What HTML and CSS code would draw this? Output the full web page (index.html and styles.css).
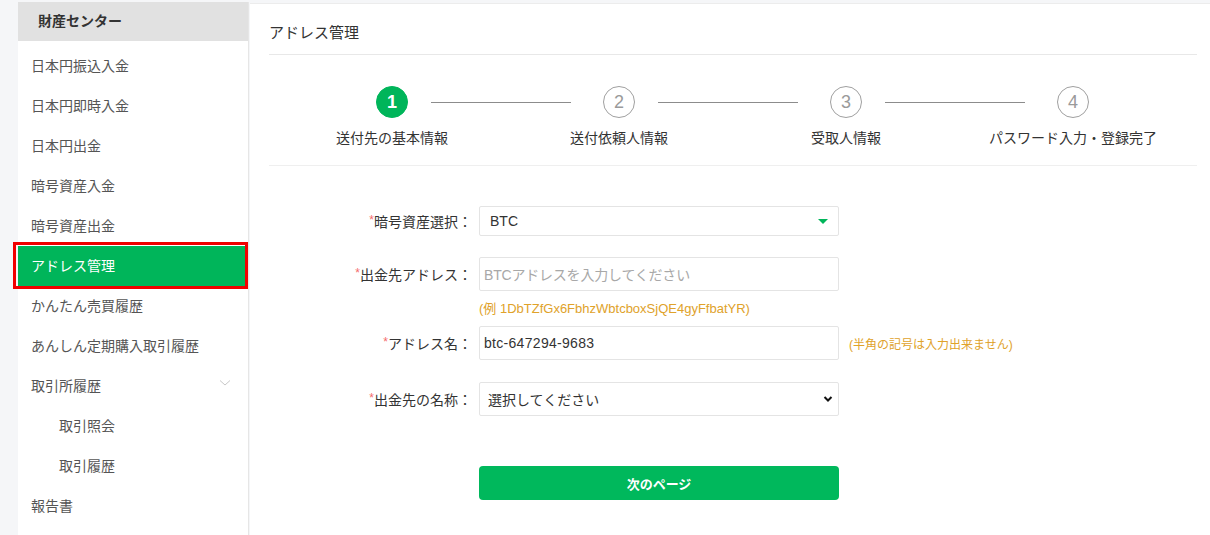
FILE: index.html
```html
<!DOCTYPE html>
<html lang="ja">
<head>
<meta charset="utf-8">
<link rel="stylesheet" href="styles.css">
</head>
<body>
<div class="page">
  <aside class="sidebar">
    <div class="side-head">財産センター</div>
    <ul class="menu">
      <li class="item">日本円振込入金</li>
      <li class="item">日本円即時入金</li>
      <li class="item">日本円出金</li>
      <li class="item">暗号資産入金</li>
      <li class="item">暗号資産出金</li>
      <li class="item active">アドレス管理<span class="mark"></span></li>
      <li class="item">かんたん売買履歴</li>
      <li class="item">あんしん定期購入取引履歴</li>
      <li class="item group">取引所履歴
        <svg class="chev" width="12" height="8" viewBox="0 0 12 8"><path d="M1 1.5 L6 6 L11 1.5" fill="none" stroke="#c8c8c8" stroke-width="1"/></svg>
      </li>
      <li class="item sub">取引照会</li>
      <li class="item sub">取引履歴</li>
      <li class="item">報告書</li>
    </ul>
  </aside>
  <main class="main">
    <div class="title">アドレス管理</div>
    <div class="steps">
      <div class="step-track">
        <span class="circle done">1</span><span class="line"></span>
        <span class="circle">2</span><span class="line"></span>
        <span class="circle">3</span><span class="line"></span>
        <span class="circle">4</span>
      </div>
      <div class="step-labels">
        <span>送付先の基本情報</span>
        <span>送付依頼人情報</span>
        <span>受取人情報</span>
        <span>パスワード入力・登録完了</span>
      </div>
    </div>
    <form class="form">
      <div class="row r1">
        <label class="lab"><i>*</i>暗号資産選択：</label>
        <div class="field pick">BTC<span class="tri"></span></div>
      </div>
      <div class="row r2">
        <label class="lab"><i>*</i>出金先アドレス：</label>
        <div class="field tall ph">BTCアドレスを入力してください</div>
      </div>
      <div class="hint-row"><span class="hint ex">(例 1DbTZfGx6FbhzWbtcboxSjQE4gyFfbatYR)</span></div>
      <div class="row r3">
        <label class="lab"><i>*</i>アドレス名：</label>
        <div class="field tall name">btc-647294-9683</div>
        <span class="hint note">(半角の記号は入力出来ません)</span>
      </div>
      <div class="row r4">
        <label class="lab"><i>*</i>出金先の名称：</label>
        <div class="field tall sel">選択してください
          <svg width="10" height="8" viewBox="0 0 10 8"><path d="M1.5 2 L5 5.5 L8.5 2" fill="none" stroke="#111" stroke-width="2"/></svg>
        </div>
      </div>
      <div class="row btn-row">
        <span class="lab"></span>
        <button type="button" class="btn">次のページ</button>
      </div>
    </form>
  </main>
</div>
</body>
</html>
```
FILE: styles.css
```css
* { box-sizing: border-box; margin: 0; padding: 0; }
html, body { height: 100%; }
body {
  background: #f5f6f8;
  font-family: "Liberation Sans", "Noto Sans CJK JP", sans-serif;
  color: #333;
  overflow: hidden;
}
.page {
  display: flex;
  padding: 2px 0 0 18px;
  height: 100%;
}
.sidebar {
  width: 231px;
  flex: none;
  background: #fff;
  border-right: 1px solid #e6e6e6;
}
.side-head {
  height: 39px;
  background: #e1e1e1;
  font-size: 14px;
  font-weight: bold;
  color: #333;
  padding-left: 20px;
  line-height: 39px;
}
.menu { list-style: none; padding-top: 5px; }
.item {
  position: relative;
  height: 40px;
  line-height: 40px;
  padding-left: 13px;
  font-size: 14px;
  color: #555;
  display: flex;
  align-items: center;
}
.item.sub { padding-left: 41px; }
.item.active {
  background: #00b55a;
  color: #fff;
  margin-right: 3px;
}
.mark {
  position: absolute;
  left: -5px; top: -4px; right: -3px; bottom: -3px;
  border: 3px solid #f00000;
}
.chev { margin-left: auto; margin-right: 17px; margin-top: -6px; }
.main {
  flex: 1;
  background: #fff;
  margin-left: 1px;
  margin-top: 1px;
  border-top: 1px solid #ececec;
  padding: 0 13px 0 19px;
}
.title {
  height: 51px;
  line-height: 58px;
  font-size: 15px;
  color: #333;
  border-bottom: 1px solid #e8e8e8;
}
.steps {
  padding-top: 31px;
  height: 111px;
  border-bottom: 1px solid #efefef;
}
.step-track {
  display: flex;
  align-items: center;
  padding-left: 107px;
}
.circle {
  width: 32px;
  height: 32px;
  flex: none;
  border-radius: 50%;
  border: 1px solid #a0a0a0;
  color: #9a9a9a;
  font-size: 18px;
  display: flex;
  align-items: center;
  justify-content: center;
  font-family: "Liberation Sans", sans-serif;
}
.circle.done {
  background: #00b55a;
  border-color: #00b55a;
  color: #fff;
  font-weight: bold;
}
.line {
  width: 140px;
  height: 1px;
  background: #8c8c8c;
  margin: 0 32px 0 23px;
  flex: none;
}
.step-labels {
  display: grid;
  grid-template-columns: repeat(4, 227px);
  padding-left: 9.5px;
  margin-top: 10px;
}
.step-labels span {
  text-align: center;
  font-size: 14px;
  line-height: 20px;
  color: #333;
}
.form { padding-top: 40px; }
.row { display: flex; align-items: center; }
.lab {
  width: 203px;
  text-align: right;
  font-size: 14px;
  color: #333;
  margin-right: 7px;
  flex: none;
}
.lab i {
  font-style: normal;
  color: #f56c6c;
  font-size: 12px;
  position: relative;
  top: -3px;
}
.field {
  width: 360px;
  height: 30px;
  border: 1px solid #e4e4e4;
  border-radius: 2px;
  font-size: 14px;
  color: #333;
  padding-left: 10px;
  display: flex;
  align-items: center;
  flex: none;
}
.field.tall { height: 34px; }
.field.ph { color: #a8a8a8; padding-left: 4px; letter-spacing: -0.2px; }
.field.name { padding-left: 4px; letter-spacing: 0.3px; }
.tri {
  margin-left: auto;
  margin-right: 10px;
  width: 0; height: 0;
  border-left: 5px solid transparent;
  border-right: 5px solid transparent;
  border-top: 5px solid #00b55a;
}
.field.sel { padding-left: 8px; }
.field.sel svg { margin-left: auto; margin-right: 5px; }
.r2 { margin-top: 21px; }
.hint-row { padding-left: 210px; height: 35px; line-height: 34px; }
.hint { font-size: 12px; color: #e0a22a; }
.hint.ex { font-size: 13px; }
.note { margin-left: 10px; }
.r4 { margin-top: 22px; }
.btn-row { margin-top: 50px; }
.btn {
  width: 360px;
  height: 34px;
  border: none;
  border-radius: 4px;
  background: #00b85c;
  color: #fff;
  font-size: 13px;
  font-weight: bold;
  font-family: "Liberation Sans", "Noto Sans CJK JP", sans-serif;
}
```
